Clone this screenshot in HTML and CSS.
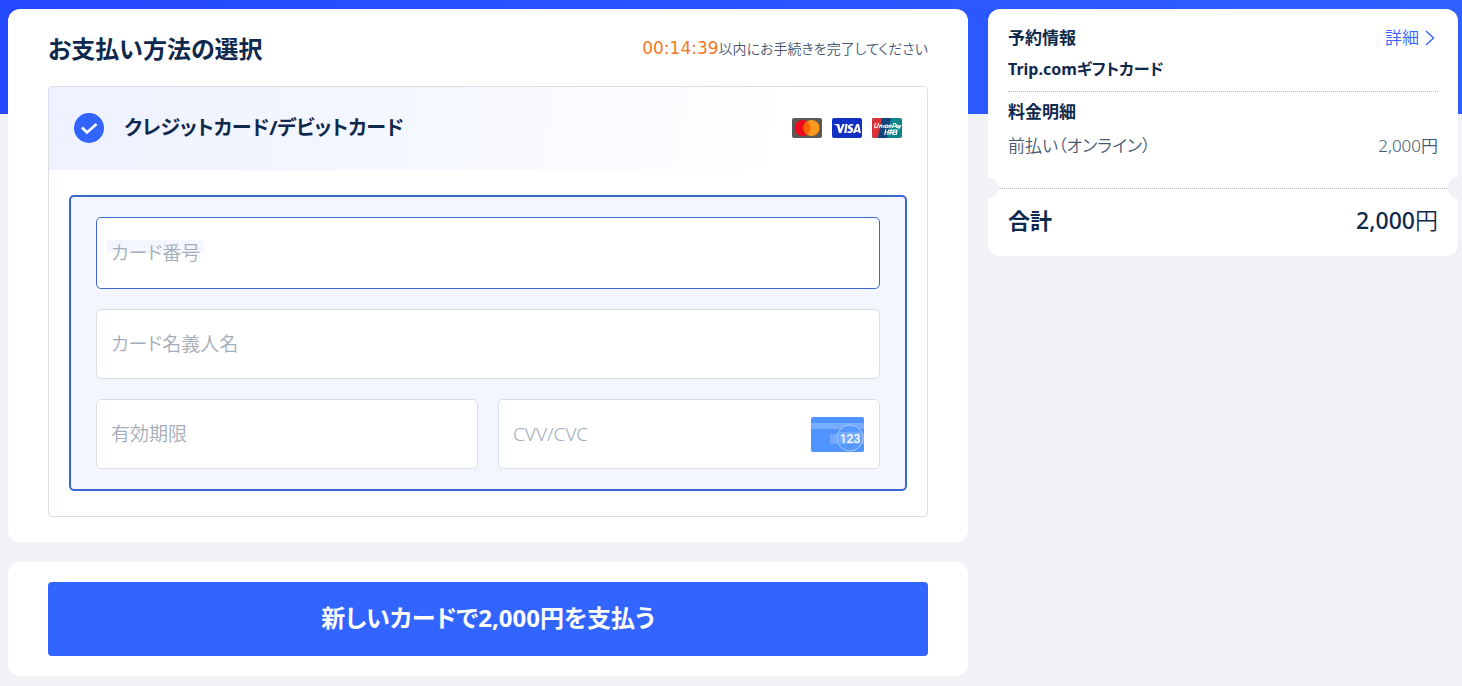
FILE: index.html
```html
<!DOCTYPE html>
<html lang="ja">
<head>
<meta charset="utf-8">
<meta name="viewport" content="width=device-width, initial-scale=1">
<title>お支払い方法の選択</title>
<link rel="stylesheet" href="styles.css">
</head>
<body>
<div class="page">
  <main class="main">
    <section class="card methods">
      <header class="methods-head">
        <h1 class="title">お支払い方法の選択</h1>
        <p class="deadline"><span class="timer">00:14:39</span>以内にお手続きを完了してください</p>
      </header>
      <div class="method">
        <div class="method-head">
          <span class="radio">
            <input class="radio-input" type="radio" id="pay-card" name="method" checked>
            <svg class="radio-tick" viewBox="0 0 30 30" aria-hidden="true"><path d="M8 14.500l5 5 9.500-8.500" fill="none" stroke="#fff" stroke-width="2.600"/></svg>
          </span>
          <label class="method-name" for="pay-card">クレジットカード/デビットカード</label>
          <span class="brands">
            <svg class="brand" viewBox="0 0 30 20" role="img" aria-label="Mastercard">
              <rect width="30" height="20" rx="2" fill="#5d5a55"/>
              <circle cx="10.500" cy="10" r="8" fill="#eb0a1e"/>
              <circle cx="19.500" cy="10" r="8" fill="#fb9a1c"/>
              <path d="M15 3.400a8 8 0 0 1 0 13.200a8 8 0 0 1 0-13.200z" fill="#ff6200"/>
            </svg>
            <svg class="brand" viewBox="0 0 30 20" role="img" aria-label="Visa">
              <rect width="30" height="20" rx="2" fill="#1230c4"/>
              <path d="M2 6h4.200c.8 0 1.100.3 1.300 1l.9 4.200L10.500 6h2.300L9.200 15H6.900L5 8C4.500 7.200 3.500 6.700 2 6.400z" fill="#fff"/>
              <path d="M13.500 6h2.200l-1.400 9h-2.200zM21.300 6.200L21 8c-1.300-.6-2.800-.6-2.800.2 0 .9 3 1.200 3 3.500 0 2.900-3.300 4-5.900 3.100l.3-1.900c1.300.7 3.200.6 3.200-.4 0-1-2.900-1-2.900-3.400 0-2.700 2.900-3.700 5.400-2.900z" fill="#fff"/>
              <path fill-rule="evenodd" d="M25 6h2l1.900 9h-2l-.3-1.300h-2.800L23.200 15h-2.300l3.200-8.300c.2-.5.500-.7.900-.7zm.5 2.600l-1.200 3.300h1.900z" fill="#fff"/>
            </svg>
            <svg class="brand" viewBox="0 0 30 20" role="img" aria-label="UnionPay">
              <rect width="30" height="20" rx="2" fill="#0b8588"/>
              <path d="M2 0h8L6 20H2a2 2 0 0 1-2-2V2a2 2 0 0 1 2-2z" fill="#db3038"/>
              <path d="M10 0h9l-4 20H6z" fill="#12437e"/>
              <path d="M3.500 5L2.600 8.500q0 1.500 1.500 1.200t1.700-1.700L6.500 5M7.400 9.800l.8-3M7.900 8q2.500-2 2 .2l-.3 1.600M11.600 9.800l.6-2.800M14.900 7q-1.600 0-1.700 1.400t1.200 1.300 1.400-1.500-1-1.200M16.800 9.800l.5-2.800M17 8q2.400-2 2.100 0l-.4 1.800M20.600 10l.9-4.400q3-.5 2.600 1.400t-3 1.400M26 7.400q-1.800-.2-1.900 1t1.300 1 .8-2M27 7.200l.3 2.400M28.800 7l-2 4" fill="none" stroke="#fff" stroke-width="1.100"/>
              <path d="M13.700 11.500L12.700 17M16.700 11.500l-1 5.500M13.300 14h3M17.500 12.600h3M19.400 11.300L17.700 16.700M17.300 14.700h3.200M21.500 12h3.500l-.7 4.500h-3.400zM21.400 14.200h3" fill="none" stroke="#fff" stroke-width="1.200"/>
            </svg>
          </span>
        </div>
        <form class="card-form">
          <div class="field field-active">
            <input class="field-input" type="text" id="card-number" inputmode="numeric">
            <label class="field-label field-label-tinted" for="card-number">カード番号</label>
          </div>
          <div class="field">
            <input class="field-input" type="text" id="card-name">
            <label class="field-label" for="card-name">カード名義人名</label>
          </div>
          <div class="field-row">
            <div class="field">
              <input class="field-input" type="text" id="card-expiry">
              <label class="field-label" for="card-expiry">有効期限</label>
            </div>
            <div class="field">
              <input class="field-input" type="text" id="card-cvv">
              <label class="field-label" for="card-cvv">CVV/CVC</label>
              <svg class="cvv-icon" viewBox="0 0 53 35" aria-hidden="true">
                <rect width="53" height="35" rx="2" fill="#4f93ff"/>
                <rect y="6" width="53" height="6" fill="#78acff"/>
                <path d="M19 17h34v10H19z" fill="#72a8ff"/>
                <circle cx="39" cy="21" r="13" fill="#5598ff" stroke="#a9caff" stroke-width="1"/>
                <path d="M28 15h22v12H26.500z" fill="#74abff"/>
                <text class="cvv-digits" x="39" y="26" text-anchor="middle">123</text>
              </svg>
            </div>
          </div>
        </form>
      </div>
    </section>
    <section class="card pay">
      <button class="pay-button" type="button">新しいカードで2,000円を支払う</button>
    </section>
  </main>
  <aside class="card summary">
    <div class="summary-top">
      <div class="line">
        <h2 class="subtitle">予約情報</h2>
        <a class="detail" href="#">詳細<svg class="chevron" viewBox="0 0 10 16" aria-hidden="true"><path d="M1 1l7.500 7L1 15" fill="none" stroke="currentColor" stroke-width="1.400"/></svg></a>
      </div>
      <p class="subtitle product">Trip.comギフトカード</p>
      <h2 class="subtitle fees">料金明細</h2>
      <div class="line fee">
        <span>前払い（オンライン）</span>
        <span>2,000円</span>
      </div>
    </div>
    <div class="tear"></div>
    <div class="line total">
      <strong class="total-name">合計</strong>
      <span class="total-sum">2,000<span class="yen">円</span></span>
    </div>
  </aside>
</div>
</body>
</html>
```
FILE: styles.css
```css
* {
  box-sizing: border-box;
}

body {
  margin: 0;
  background: #f0f2f5 linear-gradient(100deg, #2448ff, #2f60ff) no-repeat top / 100% 114px;
  color: #0f294d;
  font-family: "Noto Sans", "Noto Sans CJK JP", sans-serif;
  font-feature-settings: "palt";
}

h1, h2, p {
  margin: 0;
}

.page {
  display: grid;
  grid-template-columns: minmax(0, 96fr) minmax(0, 47fr);
  gap: 20px;
  align-items: start;
  padding: 9px 4px 10px 8px;
}

.main {
  display: grid;
  gap: 20px;
}

.card {
  background: #fff;
  border-radius: 12px;
}

.methods {
  padding: 23px 40px 25px;
}

.methods-head {
  display: flex;
  justify-content: space-between;
  align-items: center;
  margin-bottom: 21px;
}

.title {
  font-size: 24px;
  line-height: 32px;
  font-weight: 700;
}

.deadline {
  color: #455873;
  font-size: 14px;
  font-weight: 350;
  line-height: 32px;
}

.timer {
  color: #f5781e;
  font-family: "DejaVu Sans", sans-serif;
  font-size: 17px;
  font-weight: 400;
}

.method {
  border: 1px solid #dadfe6;
  border-radius: 4px;
}

.method-head {
  display: flex;
  align-items: center;
  padding: 24px 25px 25px;
  border-radius: 3px 3px 0 0;
  background: linear-gradient(100deg, #eef1ff, #f6f8ff 45%, #fff 85%);
}

.radio {
  display: grid;
  width: 30px;
  height: 30px;
  margin-right: 20px;
}

.radio-input,
.radio-tick {
  grid-area: 1 / 1;
}

.radio-input {
  appearance: none;
  margin: 0;
  border-radius: 50%;
  background: #3264ff;
}

.radio-tick {
  pointer-events: none;
}

.method-name {
  font-size: 20px;
  line-height: 34px;
  font-weight: 700;
}

.brands {
  display: flex;
  gap: 10px;
  margin-left: auto;
}

.brand {
  display: block;
  width: 30px;
  height: 20px;
}

.card-form {
  display: grid;
  gap: 20px;
  margin: 25px 20px;
  padding: 20px 25px;
  border: 2px solid #3a66cf;
  border-radius: 5px;
  background: #f3f6ff;
}

.field-row {
  display: grid;
  grid-template-columns: 1fr 1fr;
  gap: 20px;
}

.field {
  display: grid;
  align-items: center;
  height: 70px;
  border: 1px solid #dadfe6;
  border-radius: 5px;
  background: #fff;
}

.field-active {
  height: 72px;
  border-color: #3a66cf;
}

.field-input,
.field-label,
.cvv-icon {
  grid-area: 1 / 1;
}

.field-input {
  width: 100%;
  height: 100%;
  padding: 0 14px;
  border: 0;
  border-radius: 4px;
  background: none;
  outline: none;
  color: inherit;
  font: inherit;
  font-size: 19px;
}

.field-label {
  justify-self: start;
  margin-left: 10px;
  padding: 0 4px;
  color: #a4adb9;
  font-size: 19px;
  font-weight: 350;
  line-height: 26px;
  pointer-events: none;
}

.field-label-tinted {
  border-radius: 3px;
  background: linear-gradient(#f4f6ff 50%, #fff 50%);
}

.cvv-icon {
  justify-self: end;
  width: 53px;
  height: 35px;
  margin-right: 15px;
}

.cvv-digits {
  fill: #fff;
  font-family: Roboto, sans-serif;
  font-size: 12px;
  font-weight: 500;
}

.pay {
  padding: 20px 40px;
}

.pay-button {
  display: block;
  width: 100%;
  padding: 19px 20px 21px;
  border: 0;
  border-radius: 4px;
  background: #3264ff;
  color: #fff;
  font: inherit;
  font-feature-settings: inherit;
  font-size: 24px;
  line-height: 34px;
  font-weight: 700;
}

.summary-top {
  padding: 17px 20px 0;
}

.line {
  display: flex;
  justify-content: space-between;
  align-items: center;
}

.subtitle {
  font-size: 17px;
  line-height: 24px;
  font-weight: 700;
}

.detail {
  display: flex;
  align-items: center;
  gap: 6px;
  padding-right: 3px;
  color: #3264ff;
  font-size: 17px;
  font-weight: 350;
  line-height: 24px;
  text-decoration: none;
}

.chevron {
  width: 10px;
  height: 16px;
}

.product {
  padding: 7px 0 10px;
  border-bottom: 1px dotted #b4b8be;
  font-size: 16px;
}

.fees {
  padding-top: 8px;
}

.fee {
  padding: 10px 0 19px;
  color: #455873;
  font-size: 17px;
  font-weight: 350;
  line-height: 24px;
}

.tear {
  height: 22px;
  background:
    radial-gradient(circle at 0 50%, #f0f2f5 10px, transparent 11px),
    radial-gradient(circle at 100% 50%, #f0f2f5 10px, transparent 11px);
  display: grid;
  align-items: center;
  padding: 0 11px;
}

.tear::before {
  content: "";
  border-top: 1px dotted #b4b8be;
}

.total {
  padding: 5px 20px 20px;
  font-size: 22px;
  line-height: 32px;
}

.total-sum {
  font-size: 23px;
  font-weight: 500;
}

.yen {
  font-weight: 350;
}
```
